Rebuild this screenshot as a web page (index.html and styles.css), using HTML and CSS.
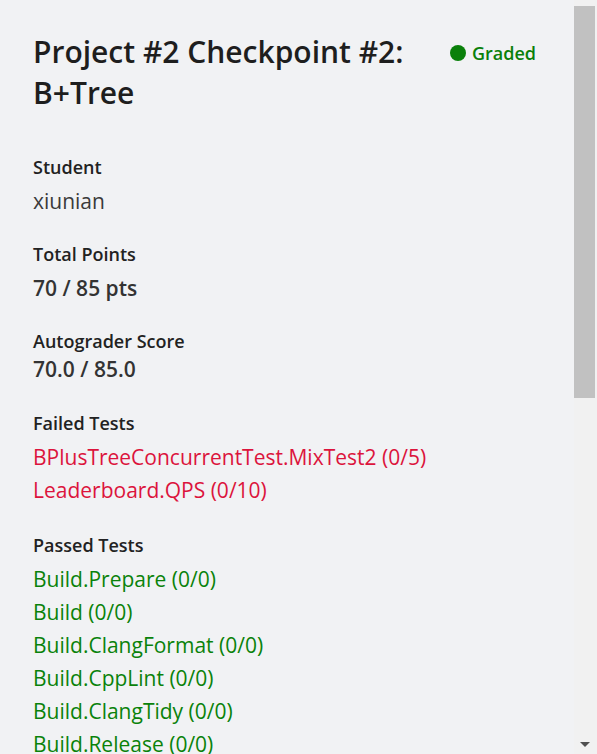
FILE: index.html
```html
<!DOCTYPE html>
<html>
<head>
<meta charset="utf-8">
<link rel="stylesheet" href="styles.css">
</head>
<body>
<div class="page">
  <main class="main">
    <header class="head">
      <h1 class="title">Project #2 Checkpoint #2: B+Tree</h1>
      <div class="badge"><span class="dot"></span>Graded</div>
    </header>
    <section class="field f-student">
      <div class="label">Student</div>
      <div class="value plain">xiunian</div>
    </section>
    <section class="field f-points">
      <div class="label">Total Points</div>
      <div class="value strong">70 / 85 pts</div>
    </section>
    <section class="field f-auto">
      <div class="label">Autograder Score</div>
      <div class="value strong tight">70.0 / 85.0</div>
    </section>
    <section class="field f-failed">
      <div class="label">Failed Tests</div>
      <ul class="tests failed">
        <li>BPlusTreeConcurrentTest.MixTest2 (0/5)</li>
        <li>Leaderboard.QPS (0/10)</li>
      </ul>
    </section>
    <section class="field f-passed">
      <div class="label">Passed Tests</div>
      <ul class="tests passed">
        <li>Build.Prepare (0/0)</li>
        <li>Build (0/0)</li>
        <li>Build.ClangFormat (0/0)</li>
        <li>Build.CppLint (0/0)</li>
        <li>Build.ClangTidy (0/0)</li>
        <li>Build.Release (0/0)</li>
      </ul>
    </section>
  </main>
  <div class="scrollbar">
    <div class="thumb"></div>
    <div class="arrow"></div>
  </div>
</div>
</body>
</html>
```
FILE: styles.css
```css
* { box-sizing: border-box; }
html, body { margin: 0; padding: 0; }
body {
  background: #f1f2f4;
  font-family: "Open Sans", "Noto Sans", sans-serif;
  color: #222;
}
.page {
  display: flex;
  height: 754px;
  overflow: hidden;
}
.main {
  flex: 1;
  padding: 31px 38px 0 33px;
  display: flex;
  flex-direction: column;
}
.head {
  display: flex;
  align-items: flex-start;
  gap: 16px;
}
.title {
  flex: 1;
  margin: 0;
  font-size: 30px;
  font-weight: 600;
  line-height: 41px;
  color: #1e1e1e;
}
.badge {
  display: flex;
  align-items: center;
  gap: 6px;
  margin-top: 10px;
  font-size: 18px;
  font-weight: 600;
  line-height: 24px;
  color: #0a800a;
}
.dot {
  width: 16px;
  height: 16px;
  border-radius: 50%;
  background: #0a800a;
}
.field { display: flex; flex-direction: column; }
.label {
  font-size: 18px;
  font-weight: 600;
  line-height: 24px;
  color: #222;
}
.value {
  font-size: 21px;
  line-height: 32px;
  margin-top: 6px;
}
.value.plain { color: #3a3a3a; font-weight: 400; }
.value.strong { color: #333; font-weight: 600; }
.value.tight { margin-top: 0; }
.f-student { margin-top: 42px; }
.f-points { margin-top: 25px; }
.f-auto { margin-top: 25px; }
.f-failed { margin-top: 26px; }
.f-passed { margin-top: 26px; }
.tests {
  list-style: none;
  margin: 6px 0 0;
  padding: 0;
  font-size: 21px;
  line-height: 33px;
}
.tests.failed { color: #dc143c; }
.tests.passed { color: #0a820a; }
.scrollbar {
  width: 23px;
  flex: none;
  background: #f1f1f1;
  display: flex;
  flex-direction: column;
  padding-top: 6px;
  position: relative;
}
.thumb {
  width: 21px;
  height: 392px;
  background: #c1c1c1;
}
.arrow {
  position: absolute;
  bottom: 7px;
  left: 6px;
  width: 0;
  height: 0;
  border-left: 5px solid transparent;
  border-right: 5px solid transparent;
  border-top: 5px solid #505050;
}
```
